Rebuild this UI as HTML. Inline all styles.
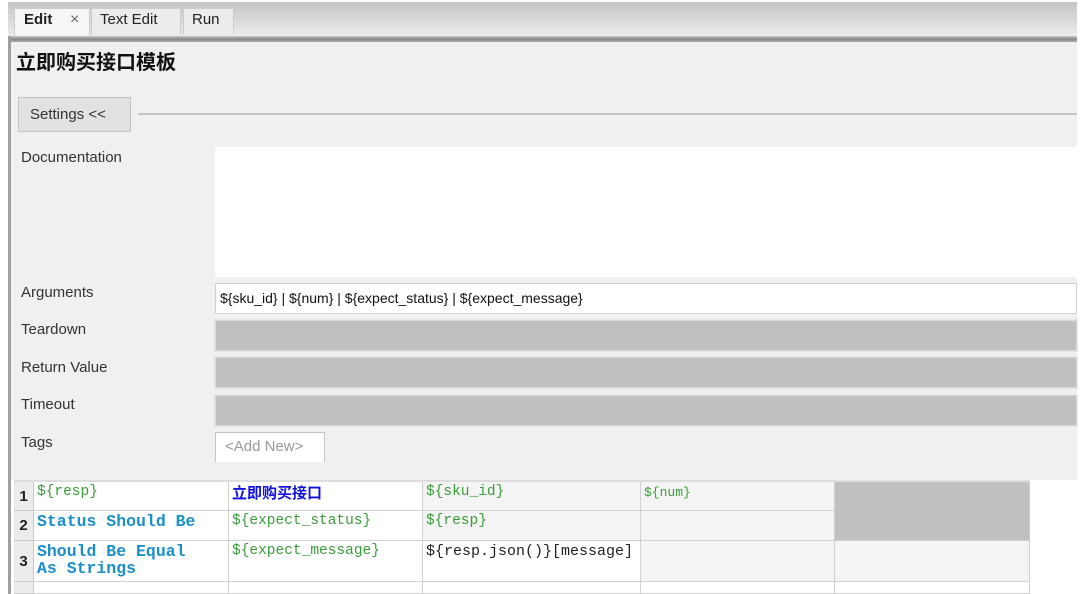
<!DOCTYPE html>
<html><head><meta charset="utf-8"><style>
*{margin:0;padding:0;box-sizing:border-box}
body{width:1080px;height:594px;overflow:hidden;background:#fff;position:relative;font-family:"Liberation Sans","Noto Sans CJK SC",sans-serif;font-size:15px;color:#222}
.a{position:absolute}
.mono{font-family:"Liberation Mono","Noto Sans CJK SC",monospace}
.lbl{position:absolute;left:21px;font-size:15px;color:#333}
.gbox{position:absolute;left:215px;width:862px;height:31px;background:#c0c0c0;border:1px solid #d8d8d8;outline:1px solid #e6e6e6}
.c{position:absolute;border-right:1px solid #d0d0d0;border-bottom:1px solid #d0d0d0;font-size:14.5px;padding:2px 0 0 3px;line-height:17px}
.g{color:#3a9c3a}.b{color:#1a8fc8;font-weight:bold;font-size:16.5px;letter-spacing:0}
.rh{position:absolute;left:14px;width:20px;background:#ececec;border-right:1px solid #c8c8c8;border-bottom:1px solid #c8c8c8;font-weight:bold;font-size:15px;text-align:center}
</style></head><body>
<div class="a" style="left:8px;top:2px;width:1069px;height:34px;background:linear-gradient(#c4c4c4,#ececec)"></div>
<div class="a" style="left:14px;top:8px;width:76px;height:28px;background:#f6f6f6;border:1px solid #ccc;border-bottom:none"></div>
<div class="a" style="left:24px;top:11px;font-weight:bold;font-size:15px">Edit</div>
<div class="a" style="left:70px;top:11px;font-size:16px;color:#666">×</div>
<div class="a" style="left:91px;top:8px;width:90px;height:26px;background:#ececec;border:1px solid #ccc;border-bottom:none"></div>
<div class="a" style="left:100px;top:11px;font-size:15px">Text Edit</div>
<div class="a" style="left:183px;top:8px;width:51px;height:26px;background:#ececec;border:1px solid #ccc;border-bottom:none"></div>
<div class="a" style="left:192px;top:11px;font-size:15px">Run</div>
<div class="a" style="left:8px;top:36px;width:1069px;height:6px;background:linear-gradient(#ccc,#888,#aaa)"></div>
<div class="a" style="left:8px;top:42px;width:1069px;height:438px;background:#f0f0f0"></div>
<div class="a" style="left:8px;top:36px;width:3px;height:558px;background:#a0a0a0"></div>
<div class="a" style="left:16px;top:46px;font-size:20px;font-weight:bold;color:#111">立即购买接口模板</div>
<div class="a" style="left:18px;top:97px;width:113px;height:35px;background:#e2e2e2;border:1px solid #c4c4c4"></div>
<div class="a" style="left:30px;top:106px;font-size:15px;color:#333">Settings &lt;&lt;</div>
<div class="a" style="left:138px;top:113px;width:939px;height:2px;background:#c4c4c4"></div>
<div class="lbl" style="top:149px">Documentation</div>
<div class="a" style="left:215px;top:147px;width:862px;height:130px;background:#fff"></div>
<div class="lbl" style="top:284px">Arguments</div>
<div class="a" style="left:215px;top:283px;width:862px;height:31px;background:#fff;border:1px solid #d0d0d0;padding:6px 0 0 4px;font-size:14px;color:#111">${sku_id} | ${num} | ${expect_status} | ${expect_message}</div>
<div class="lbl" style="top:321px">Teardown</div><div class="gbox" style="top:320px"></div>
<div class="lbl" style="top:359px">Return Value</div><div class="gbox" style="top:357px"></div>
<div class="lbl" style="top:396px">Timeout</div><div class="gbox" style="top:395px"></div>
<div class="lbl" style="top:434px">Tags</div>
<div class="a" style="left:215px;top:432px;width:110px;height:30px;background:#fff;border:1px solid #c4c4c4;border-bottom:none;padding:5px 0 0 9px;font-size:15px;color:#999">&lt;Add New&gt;</div>
<div class="a" style="left:11px;top:480px;width:1069px;height:114px;background:#fff"></div>
<div class="a" style="left:14px;top:480px;width:1016px;height:2px;background:#ddd"></div>
<div class="rh" style="top:482px;height:29px;line-height:29px">1</div>
<div class="rh" style="top:511px;height:30px;line-height:30px">2</div>
<div class="rh" style="top:541px;height:41px;line-height:41px">3</div>
<div class="rh" style="top:582px;height:12px"></div>
<div class="mono">
<div class="c g" style="left:34px;top:482px;width:195px;height:29px;background:#fff">${resp}</div>
<div class="c" style="left:229px;top:482px;width:194px;height:29px;background:#fff;color:#1010e0;font-weight:bold;font-size:15px;font-family:'Noto Sans CJK SC',sans-serif;line-height:17px">立即购买接口</div>
<div class="c g" style="left:423px;top:482px;width:218px;height:29px;background:#f4f4f4">${sku_id}</div>
<div class="c g" style="left:641px;top:482px;width:194px;height:29px;background:#f4f4f4;font-size:13px">${num}</div>
<div class="c" style="left:835px;top:482px;width:195px;height:59px;background:#c0c0c0"></div>
<div class="c b" style="left:34px;top:511px;width:195px;height:30px;background:#fff">Status Should Be</div>
<div class="c g" style="left:229px;top:511px;width:194px;height:30px;background:#fff">${expect_status}</div>
<div class="c g" style="left:423px;top:511px;width:218px;height:30px;background:#f4f4f4">${resp}</div>
<div class="c" style="left:641px;top:511px;width:194px;height:30px;background:#f4f4f4"></div>
<div class="c b" style="left:34px;top:541px;width:195px;height:41px;background:#fff">Should Be Equal<br>As Strings</div>
<div class="c g" style="left:229px;top:541px;width:194px;height:41px;background:#fff">${expect_message}</div>
<div class="c" style="left:423px;top:541px;width:218px;height:41px;background:#fff;color:#222;font-size:15px">${resp.json()}[message]</div>
<div class="c" style="left:641px;top:541px;width:194px;height:41px;background:#f4f4f4"></div>
<div class="c" style="left:835px;top:541px;width:195px;height:41px;background:#f4f4f4"></div>
<div class="c" style="left:34px;top:582px;width:195px;height:12px;background:#fff"></div>
<div class="c" style="left:229px;top:582px;width:194px;height:12px;background:#fff"></div>
<div class="c" style="left:423px;top:582px;width:218px;height:12px;background:#fff"></div>
<div class="c" style="left:641px;top:582px;width:194px;height:12px;background:#fff"></div>
<div class="c" style="left:835px;top:582px;width:195px;height:12px;background:#fff"></div>
</div>
</body></html>
